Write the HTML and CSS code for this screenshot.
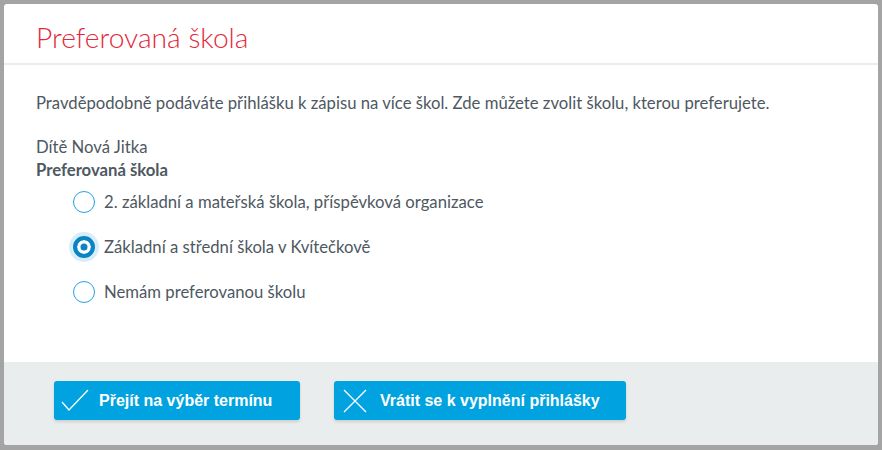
FILE: index.html
```html
<!DOCTYPE html>
<html lang="cs">
<head>
    <meta charset="UTF-8">
    <title>Preferovaná škola</title>
    <link rel="stylesheet" href="styles.css">
</head>
<body>
<div class="modal">
    <div class="modal-header">
        <h1>Preferovaná škola</h1>
    </div>
    <div class="modal-body">
        <p class="intro">Pravděpodobně podáváte přihlášku k zápisu na více škol. Zde můžete zvolit školu, kterou preferujete.</p>
        <div class="child">Dítě Nová Jitka</div>
        <div class="field-label">Preferovaná škola</div>
        <div class="options">
            <label class="option"><span class="radio"></span>2. základní a mateřská škola, příspěvková organizace</label>
            <label class="option"><span class="radio checked"></span>Základní a střední škola v Kvítečkově</label>
            <label class="option"><span class="radio"></span>Nemám preferovanou školu</label>
        </div>
    </div>
    <div class="modal-footer">
        <button class="btn btn-first">
            <svg width="30" height="26" viewBox="0 0 30 26"><path d="M1 14 L8 22 L27 2" fill="none" stroke="#fff" stroke-width="1.3"/></svg>
            Přejít na výběr termínu
        </button>
        <button class="btn btn-second">
            <svg width="26" height="26" viewBox="0 0 26 26"><path d="M2 2 L24 24 M24 2 L2 24" fill="none" stroke="#fff" stroke-width="1.3"/></svg>
            Vrátit se k vyplnění přihlášky
        </button>
    </div>
</div>
</body>
</html>
```

FILE: styles.css
```css
body {
    margin: 0;
    padding: 4px;
    background: #a4a4a4;
    font-family: Lato, "Liberation Sans", sans-serif;
    color: #4e5861
}

.modal {
    width: 874px;
    height: 441px;
    background: #fff;
    border-radius: 3px;
    display: flex;
    flex-direction: column;
    overflow: hidden
}

.modal-header {
    border-bottom: 2px solid #e9eeee;
    padding: 6px 0 0 32px;
    box-sizing: border-box;
    height: 61px;
    display: flex;
    align-items: center
}

h1 {
    margin: 0;
    font-size: 28.2px;
    font-weight: 300;
    color: #e3283b
}

.modal-body {
    flex: 1;
    padding: 27px 32px 0
}

.intro {
    margin: 0 0 22px;
    font-size: 16.7px;
    line-height: 22px
}

.child {
    font-size: 16.7px;
    line-height: 23px
}

.field-label {
    font-size: 16.7px;
    line-height: 23px;
    font-weight: bold
}

.options {
    padding-left: 37px;
    padding-top: 9px;
    display: flex;
    flex-direction: column;
    gap: 23px
}

.option {
    display: flex;
    align-items: center;
    gap: 9px;
    font-size: 16.7px;
    line-height: 22px
}

.radio {
    width: 22px;
    height: 22px;
    border: 1.5px solid #1fa4e3;
    border-radius: 50%;
    box-sizing: border-box;
    flex-shrink: 0
}

.radio.checked {
    border: 4px solid #0a84c4;
    background: #0a84c4;
    box-shadow: inset 0 0 0 3.5px #fff, 0 0 0 4px #d5eefa
}

.modal-footer {
    height: 83px;
    background: #e9edee;
    padding: 19px 0 0 50px;
    box-sizing: border-box;
    display: flex;
    align-items: flex-start;
    gap: 34px
}

.btn {
    height: 39px;
    background: #00a3e0;
    color: #fff;
    border: none;
    border-radius: 3px;
    box-shadow: 0 2px 3px rgba(0, 0, 0, 0.12);
    font-family: "Liberation Sans", Arial, sans-serif;
    font-weight: bold;
    font-size: 16px;
    display: flex;
    align-items: center;
    gap: 8px;
    padding: 0 10px 0 7px;
    cursor: pointer
}

.btn-first {
    width: 246px
}

.btn-second {
    width: 292px;
    padding-left: 8px;
    gap: 12px
}
```
